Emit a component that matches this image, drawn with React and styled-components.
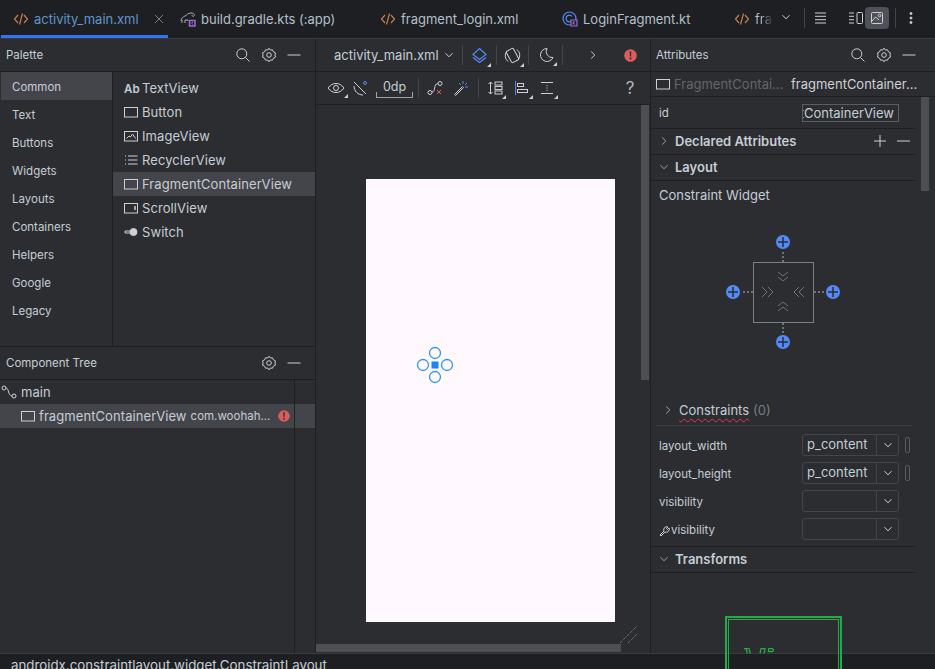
import styled, { createGlobalStyle } from "styled-components";

const GlobalStyle = createGlobalStyle`
  html, body { margin: 0; padding: 0; height: 100%; background: #1e1f22; overflow: hidden; }
  #root { height: 100%; }
  * { box-sizing: border-box; }
`;

const Svg = ({ size = 16, w, h, color = "#ced0d6", sw = 1, children }) => (
  <svg width={w || size} height={h || size} viewBox={`0 0 ${w || size} ${h || size}`} fill="none" stroke={color} strokeWidth={sw} style={{ flex: "none", display: "block" }}>
    {children}
  </svg>
);

const XmlIcon = () => (
  <Svg color="#c77d55" sw={1.2}>
    <path d="M5 4 1.500 8 5 12M11 4l3.500 4L11 12M9.500 2.500l-3 11" />
  </Svg>
);
const GradleIcon = () => (
  <Svg>
    <path d="M1 10c0-3 2-4 4-5s3-3 6-3 4 2 3 3-2 0-2-1M2 12V9M5 12V9l3 0v1" stroke="#a8adb5" />
    <path d="M9.500 9.500h5.500v5.500H9.500z" stroke="#9b6bd6" strokeWidth="1.500" />
    <path d="M13 11l-1.500 1.200L13 13.500" stroke="#9b6bd6" />
  </Svg>
);
const KotlinClassIcon = () => (
  <Svg sw={1.2}>
    <circle cx="7.500" cy="7.500" r="6.500" stroke="#548af7" />
    <path d="M10 5.500a3.300 3.300 0 1 0 0 4" stroke="#548af7" />
    <path d="M9 9h6v6H9z" fill="#1e1f22" stroke="#9b6bd6" />
    <path d="M12.500 10.500 11 12l1.500 1.500" stroke="#9b6bd6" />
  </Svg>
);
const Chevron = ({ dir = "down", size = 10, color = "#ced0d6" }) => {
  const d = { down: "M1.500 3.200 5 6.800l3.500-3.600", right: "M3.200 1.500 6.800 5 3.200 8.500" }[dir];
  return (
    <Svg size={size} color={color}>
      <path d={d} />
    </Svg>
  );
};
const SearchIcon = () => (
  <Svg>
    <circle cx="6.800" cy="6.800" r="5" />
    <path d="m10.500 10.500 4 4" />
  </Svg>
);
const GearIcon = () => (
  <Svg>
    <path d="M8 1.200 9.300 3l2.200-.2.900 2 2 1L14 8l.4 2.200-2 1-.9 2-2.200-.2L8 14.800 6.700 13l-2.200.2-.9-2-2-1L2 8l-.4-2.200 2-1 .9-2 2.200.2z" />
    <circle cx="8" cy="8" r="2.300" />
  </Svg>
);
const Dash = () => (
  <Svg size={14}>
    <path d="M.5 7h13" />
  </Svg>
);
const Corner = styled.span`
  position: absolute;
  right: -3px;
  bottom: -3px;
  width: 0;
  height: 0;
  border-left: 4px solid transparent;
  border-bottom: 4px solid #ced0d6;
`;
const IconWrap = styled.span`
  position: relative;
  display: block;
`;
const ErrorDot = ({ size = 13 }) => (
  <svg width={size} height={size} viewBox="0 0 13 13" style={{ flex: "none", display: "block" }}>
    <circle cx="6.500" cy="6.500" r="6.300" fill="#db5c5c" />
    <path d="M5.700 2.500h1.600l-.2 5H5.900z" fill="#2b2d30" />
    <circle cx="6.500" cy="9.600" r="1" fill="#2b2d30" />
  </svg>
);

const Page = styled.div`
  width: 935px;
  height: 669px;
  display: flex;
  flex-direction: column;
  background: #1e1f22;
  font-family: Inter, "Liberation Sans", sans-serif;
  color: #ced0d6;
  overflow: hidden;
`;
const TabBar = styled.div`
  height: 39px;
  flex: none;
  display: flex;
  align-items: flex-start;
  padding-left: 1px;
  border-bottom: 1px solid #393b40;
`;
const Tab = styled.div`
  width: ${(p) => p.$w}px;
  flex: none;
  height: 38px;
  padding: 3px 0 0 12px;
  display: flex;
  align-items: center;
  gap: 5px;
  font-size: 13px;
  color: ${(p) => (p.$active ? "#5f95c9" : "#b4c0cc")};
  border-bottom: 3px solid ${(p) => (p.$active ? "#3574f0" : "transparent")};
  white-space: nowrap;
`;
const TabLabel = styled.span`
  margin-top: -1px;
`;
const CloseSlot = styled.span`
  margin-left: 10px;
`;
const FadedTab = styled.span`
  width: 20px;
  overflow: hidden;
  background: linear-gradient(90deg, #b4c0cc 30%, #1e1f22 90%);
  -webkit-background-clip: text;
  background-clip: text;
  color: transparent;
`;
const TabTools = styled.div`
  position: absolute;
  top: 7px;
  left: 780px;
  display: flex;
  align-items: center;
`;
const ToolSlot = styled.span`
  width: ${(p) => p.$w || 24}px;
  height: 22px;
  margin-left: ${(p) => p.$ml || 0}px;
  border-radius: 4px;
  display: flex;
  align-items: center;
  justify-content: center;
  background: ${(p) => (p.$active ? "#4e5157" : "transparent")};
`;
const VDivider = styled.span`
  width: 1px;
  height: 20px;
  background: #43454a;
  flex: none;
  margin: 0 ${(p) => p.$mr || 0}px 0 ${(p) => p.$ml || 0}px;
`;
const Workspace = styled.div`
  flex: 1;
  min-height: 0;
  display: flex;
  background: #2b2d30;
`;
const LeftColumn = styled.div`
  width: 316px;
  flex: none;
  display: flex;
  flex-direction: column;
  border-right: 1px solid #1e1f22;
`;
const PanelHeader = styled.div`
  height: 33px;
  flex: none;
  display: flex;
  align-items: center;
  padding: 0 ${(p) => p.$right || 14}px 0 ${(p) => p.$left || 6}px;
  font-size: 11.500px;
  color: #c5ced6;
  border-bottom: 1px solid #1e1f22;
`;
const HeaderTitle = styled.span`
  flex: 1;
`;
const HeaderIcons = styled.div`
  display: flex;
  align-items: center;
  gap: 10px;
`;
const PaletteBody = styled.div`
  height: 275px;
  flex: none;
  display: flex;
  border-bottom: 1px solid #1e1f22;
`;
const Categories = styled.div`
  width: 113px;
  flex: none;
  padding-left: 1px;
  border-right: 1px solid #1e1f22;
`;
const Category = styled.div`
  height: 28px;
  padding: 2px 0 0 11px;
  display: flex;
  align-items: center;
  font-size: 11.500px;
  color: #c5ced6;
  background: ${(p) => (p.$active ? "#43454a" : "transparent")};
`;
const WidgetList = styled.div`
  flex: 1;
  padding-top: 4px;
`;
const WidgetRow = styled.div`
  height: 24px;
  padding-left: 11px;
  display: flex;
  align-items: center;
  gap: 4px;
  font-size: 13px;
  letter-spacing: 0.08px;
  color: #c5ced6;
  background: ${(p) => (p.$active ? "#43454a" : "transparent")};
`;
const AbMark = styled.span`
  width: 14px;
  font-size: 11.500px;
  font-weight: 600;
  white-space: nowrap;
`;
const AbSlot = styled.span`
  width: 14px;
  flex: none;
`;
const TreeBody = styled.div`
  flex: 1;
  display: flex;
  position: relative;
`;
const TreeRows = styled.div`
  flex: 1;
`;
const TreeRow = styled.div`
  height: 24px;
  display: flex;
  align-items: center;
  padding-left: ${(p) => p.$indent}px;
  gap: 4px;
  font-size: 13px;
  letter-spacing: 0.08px;
  color: #c5ced6;
  background: ${(p) => (p.$active ? "#43454a" : "transparent")};
`;
const TreeHint = styled.span`
  font-size: 11.500px;
  letter-spacing: 0;
  flex: 1;
  color: #c5ced6;
`;
const TreeGutter = styled.div`
  width: 1px;
  height: 100%;
  background: #1e1f22;
  position: absolute;
  left: 294px;
  top: 0;
`;
const ErrorSlot = styled.span`
  margin-right: 25px;
`;
const Center = styled.div`
  width: 335px;
  flex: none;
  display: flex;
  flex-direction: column;
  border-right: 1px solid #1e1f22;
  position: relative;
`;
const DesignBar = styled.div`
  height: 33px;
  flex: none;
  display: flex;
  align-items: center;
  border-bottom: 1px solid #1e1f22;
  padding-left: 18px;
`;
const FileSelect = styled.div`
  display: flex;
  align-items: center;
  gap: 5px;
  font-size: 13px;
  color: #c5ced6;
  width: 128px;
  flex: none;
`;
const BarIcon = styled.span`
  width: ${(p) => p.$w || 33}px;
  margin-left: ${(p) => p.$ml || 0}px;
  display: flex;
  align-items: center;
  justify-content: center;
  flex: none;
`;
const HelpMark = styled(BarIcon)`
  font-size: 17px;
  color: #b4b8bf;
`;
const LayoutBar = styled.div`
  height: 33px;
  flex: none;
  display: flex;
  align-items: center;
  border-bottom: 1px solid #1e1f22;
  padding-left: 11px;
`;
const DpBox = styled.div`
  width: 37px;
  margin: 0 5px 0 8px;
  height: 19px;
  font-size: 12.500px;
  color: #c5ced6;
  text-align: center;
  line-height: 15px;
  border-bottom: 1px solid #9da0a8;
  border-left: 1px solid #9da0a8;
  border-right: 1px solid #9da0a8;
  border-image: linear-gradient(transparent 70%, #9da0a8 70%) 1;
  flex: none;
`;
const Canvas = styled.div`
  flex: 1;
  padding: 74px 0 0 50px;
  position: relative;
`;
const Phone = styled.div`
  width: 249px;
  height: 443px;
  background: #fff9ff;
  position: relative;
`;
const Handles = styled.div`
  position: absolute;
  left: 50px;
  top: 167px;
`;
const VScroll = styled.div`
  position: absolute;
  left: 325px;
  top: 0;
  width: 8px;
  height: 275px;
  background: #4d4f53;
`;
const HScroll = styled.div`
  position: absolute;
  left: 0;
  bottom: 1px;
  width: 305px;
  height: 8px;
  background: #4d4f53;
`;
const ResizeMark = styled.div`
  position: absolute;
  left: 303px;
  bottom: 9px;
`;
const Right = styled.div`
  flex: 1;
  display: flex;
  flex-direction: column;
  position: relative;
  min-width: 0;
`;
const AttrScroll = styled.div`
  position: absolute;
  left: 270px;
  top: 58px;
  width: 8px;
  height: 94px;
  background: #4d4f53;
`;
const ComponentRow = styled.div`
  height: 25px;
  flex: none;
  display: flex;
  align-items: center;
  padding-left: 5px;
  gap: 4px;
  font-size: 13px;
  white-space: nowrap;
  border-bottom: 1px solid #1e1f22;
`;
const Muted = styled.span`
  color: #63666c;
  width: 113px;
  flex: none;
`;
const AttrColumn = styled.div`
  width: 265px;
  flex: none;
`;
const IdRow = styled.div`
  height: 32px;
  display: flex;
  align-items: center;
  justify-content: space-between;
  padding: 0 0 0 8px;
  border-bottom: 1px solid #1e1f22;
  font-size: 11.500px;
  color: #c5ced6;
`;
const IdField = styled.div`
  width: 97px;
  height: 18px;
  margin-right: 17px;
  border: 1px solid #5a5d63;
  font-size: 13px;
  line-height: 16px;
  color: #c5ced6;
  overflow: hidden;
  white-space: nowrap;
  direction: rtl;
  text-align: left;
  padding: 0 4px 0 0;
`;
const SectionRow = styled.div`
  height: 26px;
  display: flex;
  align-items: center;
  padding: 0 6px 2px 8px;
  gap: 6px;
  border-bottom: 1px solid #1e1f22;
  font-size: 13px;
  font-weight: 600;
  color: #c5ced6;
`;
const SectionName = styled.span`
  flex: 1;
`;
const SectionTools = styled.div`
  display: flex;
  gap: 9px;
`;
const WidgetTitle = styled.div`
  padding: 6px 0 0 8px;
  height: 29px;
  font-size: 13px;
  color: #c5ced6;
`;
const WidgetDiagram = styled.div`
  height: 185px;
  padding: 24px 0 0 74px;
`;
const ConstraintsRow = styled.div`
  height: 31px;
  margin: 0 4px 0 5px;
  display: flex;
  align-items: center;
  gap: 6px;
  padding: 0 0 0 7px;
  border-bottom: 1px solid #393b40;
  font-size: 13px;
  color: #c5ced6;
`;
const Squiggle = styled.span`
  text-decoration: underline wavy #db3b4b 1px;
  text-underline-offset: 3px;
`;
const ZeroCount = styled.span`
  color: #7a7e85;
  margin-left: -2px;
`;
const AttrList = styled.div`
  padding: 5px 0 0 0;
`;
const AttrRow = styled.div`
  height: 28px;
  display: flex;
  align-items: center;
  padding-left: 8px;
  font-size: 11.500px;
  color: #c5ced6;
`;
const AttrName = styled.span`
  width: 143px;
  flex: none;
  display: flex;
  align-items: center;
  gap: 1px;
  padding-top: 2px;
`;
const Combo = styled.div`
  width: 97px;
  height: 22px;
  flex: none;
  display: flex;
  border: 1px solid #43454a;
  border-radius: 3px;
  font-size: 13px;
  color: #c5ced6;
`;
const ComboValue = styled.span`
  flex: 1;
  padding-left: 4px;
  line-height: 18px;
`;
const ComboArrow = styled.span`
  width: 22px;
  border-left: 1px solid #43454a;
  display: flex;
  align-items: center;
  justify-content: center;
`;
const Pill = styled.span`
  width: 5px;
  height: 16px;
  margin-left: 6px;
  border: 1px solid #5a5d63;
  border-radius: 2px;
`;
const TransformsSection = styled(SectionRow)`
  margin-top: 3px;
  border-top: 1px solid #1e1f22;
  height: 27px;
`;
const TransformBox = styled.div`
  margin: 43px 0 0 74px;
  width: 117px;
  height: 60px;
  border: 2px solid #27a84a;
  border-bottom: none;
  padding: 1px 1px 0;
`;
const TransformInner = styled.div`
  height: 100%;
  border: 1px solid #27a84a;
  border-bottom: none;
  padding: 28px 0 0 15px;
`;
const StatusBar = styled.div`
  height: 16px;
  flex: none;
  border-top: 1px solid #393b40;
  background: #1e1f22;
  padding: 4px 0 0 11px;
  font-size: 13.300px;
  line-height: 15px;
  color: #c5ced6;
  white-space: nowrap;
  overflow: hidden;
`;

const RectIcon = ({ inner }) => (
  <Svg size={14} color="#ced0d6">
    <rect x=".5" y="2.500" width="13" height="9.500" />
    {inner}
  </Svg>
);

const widgetIcons = {
  Button: <RectIcon />,
  ImageView: <RectIcon inner={<path d="M2.500 9.500 5 7l1.500 1 2-3 3 4.500" />} />,
  RecyclerView: (
    <Svg size={14}>
      <path d="M1 3h1M1 7h1M1 11h1M4 3h9.500M4 7h9.500M4 11h9.500" />
    </Svg>
  ),
  FragmentContainerView: <RectIcon />,
  ScrollView: <RectIcon inner={<path d="M11 5v4" strokeWidth="1.500" />} />,
  Switch: (
    <Svg size={14}>
      <path d="M1 6h5M1 8h5M1 6v2" />
      <circle cx="9.500" cy="7" r="3.500" fill="#ced0d6" />
    </Svg>
  ),
};

const categories = ["Common", "Text", "Buttons", "Widgets", "Layouts", "Containers", "Helpers", "Google", "Legacy"];
const widgets = ["Button", "ImageView", "RecyclerView", "FragmentContainerView", "ScrollView", "Switch"];

const PlusDot = ({ x, y }) => (
  <g>
    <circle cx={x} cy={y} r="7" fill="#548af7" stroke="none" />
    <path d={`M${x - 5} ${y}h10M${x} ${y - 5}v10`} stroke="#2b2d30" strokeWidth="1.500" />
  </g>
);

const ConstraintWidget = () => (
  <svg width="116" height="116" viewBox="0 0 116 116" fill="none" style={{ display: "block" }}>
    <rect x="28.500" y="28.500" width="60" height="60" stroke="#7a7e85" />
    <path d="M58 18v10M58 89v10M18 58h10M89 58h10" stroke="#868a91" strokeWidth="1.500" strokeDasharray="2 2" />
    <PlusDot x={58} y={8} />
    <PlusDot x={58} y={108} />
    <PlusDot x={8} y={58} />
    <PlusDot x={108} y={58} />
    <path d="M53 38l5 4 5-4M53 43l5 4 5-4M53 72l5-4 5 4M53 77l5-4 5 4M37 53l5 5-5 5M43 53l5 5-5 5M74 53l-5 5 5 5M79 53l-5 5 5 5" stroke="#6f737a" />
  </svg>
);

const SelectionHandles = () => (
  <svg width="38" height="38" viewBox="0 0 38 38" fill="none" stroke="#2f95f5" strokeWidth="1.300" style={{ display: "block" }}>
    <circle cx="19" cy="7" r="5.500" />
    <circle cx="19" cy="31" r="5.500" />
    <circle cx="7" cy="19" r="5.500" />
    <circle cx="31" cy="19" r="5.500" />
    <rect x="15.500" y="15.500" width="7" height="7" fill="#1a86f5" stroke="none" />
  </svg>
);

const Cornered = ({ children }) => (
  <IconWrap>
    {children}
    <Corner />
  </IconWrap>
);

const App = () => (
  <>
    <GlobalStyle />
    <Page>
      <TabBar>
        <Tab $active $w={167}>
          <XmlIcon />
          <TabLabel>activity_main.xml</TabLabel>
          <CloseSlot>
            <Svg size={10} color="#7a7e85">
              <path d="M1 1l8 8M9 1 1 9" />
            </Svg>
          </CloseSlot>
        </Tab>
        <Tab $w={200}>
          <GradleIcon />
          <TabLabel>build.gradle.kts (:app)</TabLabel>
        </Tab>
        <Tab $w={182}>
          <XmlIcon />
          <TabLabel>fragment_login.xml</TabLabel>
        </Tab>
        <Tab $w={172}>
          <KotlinClassIcon />
          <TabLabel>LoginFragment.kt</TabLabel>
        </Tab>
        <Tab $w={60}>
          <XmlIcon />
          <FadedTab>fragment</FadedTab>
        </Tab>
        <TabTools>
          <ToolSlot $w={14}>
            <Chevron size={12} />
          </ToolSlot>
          <VDivider $ml={10} $mr={3} />
          <ToolSlot $w={24}>
            <Svg>
              <path d="M3 3h11M3 6.300h11M3 9.700h11M3 13h11" />
            </Svg>
          </ToolSlot>
          <ToolSlot $w={18} $ml={15}>
            <Svg>
              <path d="M1 3h5M1 6.300h5M1 9.700h5M1 13h5" />
              <rect x="9" y="2.500" width="5.500" height="11" rx="1" />
            </Svg>
          </ToolSlot>
          <ToolSlot $w={24} $active>
            <Svg>
              <rect x="2.500" y="2.500" width="11" height="11" rx="1" />
              <path d="M3 11l3.500-4 3.500 3" />
              <circle cx="10.500" cy="5.500" r="1.300" />
            </Svg>
          </ToolSlot>
          <VDivider $ml={6} $mr={6} />
          <ToolSlot $w={18}>
            <Svg>
              <circle cx="8" cy="3.500" r="1" fill="#ced0d6" />
              <circle cx="8" cy="8" r="1" fill="#ced0d6" />
              <circle cx="8" cy="12.500" r="1" fill="#ced0d6" />
            </Svg>
          </ToolSlot>
        </TabTools>
      </TabBar>

      <Workspace>
        <LeftColumn>
          <PanelHeader>
            <HeaderTitle>Palette</HeaderTitle>
            <HeaderIcons>
              <SearchIcon />
              <GearIcon />
              <Dash />
            </HeaderIcons>
          </PanelHeader>
          <PaletteBody>
            <Categories>
              {categories.map((c, i) => (
                <Category key={c} $active={i === 0}>
                  {c}
                </Category>
              ))}
            </Categories>
            <WidgetList>
              <WidgetRow>
                <AbSlot>
                  <AbMark>Ab</AbMark>
                </AbSlot>
                TextView
              </WidgetRow>
              {widgets.map((w) => (
                <WidgetRow key={w} $active={w === "FragmentContainerView"}>
                  {widgetIcons[w]}
                  {w}
                </WidgetRow>
              ))}
            </WidgetList>
          </PaletteBody>
          <PanelHeader>
            <HeaderTitle>Component Tree</HeaderTitle>
            <HeaderIcons>
              <GearIcon />
              <Dash />
            </HeaderIcons>
          </PanelHeader>
          <TreeBody>
            <TreeRows>
              <TreeRow $indent={1}>
                <Svg>
                  <circle cx="3" cy="4" r="2" />
                  <circle cx="13" cy="12" r="2" />
                  <path d="M5 4c3 0 2 8 6 8" />
                </Svg>
                main
              </TreeRow>
              <TreeRow $active $indent={21}>
                <RectIcon />
                fragmentContainerView
                <TreeHint>com.woohah...</TreeHint>
                <ErrorSlot>
                  <ErrorDot size={12} />
                </ErrorSlot>
              </TreeRow>
            </TreeRows>
            <TreeGutter />
          </TreeBody>
        </LeftColumn>

        <Center>
          <DesignBar>
            <FileSelect>
              activity_main.xml
              <Chevron />
            </FileSelect>
            <VDivider />
            <BarIcon $w={33}>
              <Cornered>
                <Svg size={17} color="#548af7" sw={1.2}>
                  <path d="M8.500 1.500 15 7.500l-6.500 5-6.500-5zM2 10.500l6.500 5 6.500-5" />
                </Svg>
              </Cornered>
            </BarIcon>
            <VDivider />
            <BarIcon $w={31}>
              <Cornered>
                <Svg size={17}>
                  <path d="M2.500 4.500A7.500 7.500 0 0 0 4 14.500M14.500 12.500A7.500 7.500 0 0 0 13 2.500" />
                  <rect x="4.500" y="2" width="8" height="13" rx="1.500" transform="rotate(-28 8.500 8.500)" />
                </Svg>
              </Cornered>
            </BarIcon>
            <VDivider />
            <BarIcon $w={33}>
              <Cornered>
                <Svg>
                  <path d="M9 1.500a6.500 6.500 0 1 0 6 9 6 6 0 0 1-6-9z" />
                </Svg>
              </Cornered>
            </BarIcon>
            <VDivider />
            <BarIcon $w={60}>
              <Chevron dir="right" />
            </BarIcon>
            <BarIcon $w={14}>
              <ErrorDot />
            </BarIcon>
          </DesignBar>
          <LayoutBar>
            <BarIcon $w={18}>
              <Cornered>
                <Svg w={18} h={14}>
                  <path d="M1 7c4-6 12-6 16 0-4 6-12 6-16 0z" />
                  <circle cx="9" cy="7" r="2.500" />
                </Svg>
              </Cornered>
            </BarIcon>
            <BarIcon $w={16} $ml={7}>
              <Svg>
                <path d="M2 2l12 12M2 6c0 5 4 9 9 9" />
                <circle cx="13" cy="3" r="1.500" stroke="#548af7" />
              </Svg>
            </BarIcon>
            <DpBox>0dp</DpBox>
            <VDivider />
            <BarIcon $w={32}>
              <Svg>
                <circle cx="3" cy="12.500" r="2" />
                <circle cx="13" cy="3.500" r="2" />
                <path d="M5 12c4 0 1-8 6-8.500" />
                <path d="M10 10l4 4M14 10l-4 4" stroke="#db5c5c" />
              </Svg>
            </BarIcon>
            <BarIcon $w={20}>
              <Svg>
                <path d="M1.500 14.500l8-8 1 1-8 8z" />
                <path d="M10 1v3M14 3l-2 2M15 7h-3M6 3l2 2" stroke="#548af7" />
              </Svg>
            </BarIcon>
            <VDivider $ml={7} $mr={5} />
            <BarIcon $w={22}>
              <Cornered>
                <Svg>
                  <path d="M3.500 2v12M1.500 4l2-2 2 2M1.500 12l2 2 2-2" />
                  <rect x="8" y="2" width="7" height="3" />
                  <rect x="8" y="6.500" width="7" height="3" />
                  <rect x="8" y="11" width="7" height="3" />
                </Svg>
              </Cornered>
            </BarIcon>
            <BarIcon $w={22} $ml={5}>
              <Cornered>
                <Svg>
                  <path d="M1.500 1v14" stroke="#548af7" />
                  <rect x="3.500" y="3.500" width="6" height="3" />
                  <rect x="3.500" y="9.500" width="10" height="3" />
                </Svg>
              </Cornered>
            </BarIcon>
            <BarIcon $w={20} $ml={4}>
              <Cornered>
                <Svg>
                  <path d="M2 2.500h12M2 13.500h12M8 5v1M8 7.500v1M8 10v1" />
                </Svg>
              </Cornered>
            </BarIcon>
            <HelpMark $w={28} $ml={59}>
              ?
            </HelpMark>
          </LayoutBar>
          <Canvas>
            <Phone>
              <Handles>
                <SelectionHandles />
              </Handles>
            </Phone>
            <VScroll />
            <HScroll />
            <ResizeMark>
              <svg width="20" height="20" viewBox="0 0 20 20" stroke="#8a8d93" strokeDasharray="1 1" style={{ display: "block" }}>
                <path d="M1 19 18 2M9 19l9-9" />
              </svg>
            </ResizeMark>
          </Canvas>
        </Center>

        <Right>
          <PanelHeader $left={5} $right={19}>
            <HeaderTitle>Attributes</HeaderTitle>
            <HeaderIcons>
              <SearchIcon />
              <GearIcon />
              <Dash />
            </HeaderIcons>
          </PanelHeader>
          <ComponentRow>
            <RectIcon />
            <Muted>FragmentContai...</Muted>
            fragmentContainer...
          </ComponentRow>
          <AttrColumn>
            <IdRow>
              id
              <IdField>fragmentContainerView</IdField>
            </IdRow>
            <SectionRow>
              <Chevron dir="right" color="#9da0a8" />
              <SectionName>Declared Attributes</SectionName>
              <SectionTools>
                <Svg size={14}>
                  <path d="M7 1v12M1 7h12" />
                </Svg>
                <Svg size={14}>
                  <path d="M1 7h13" />
                </Svg>
              </SectionTools>
            </SectionRow>
            <SectionRow>
              <Chevron color="#9da0a8" />
              <SectionName>Layout</SectionName>
            </SectionRow>
            <WidgetTitle>Constraint Widget</WidgetTitle>
            <WidgetDiagram>
              <ConstraintWidget />
            </WidgetDiagram>
            <ConstraintsRow>
              <Chevron dir="right" color="#9da0a8" />
              <Squiggle>Constraints</Squiggle>
              <ZeroCount>(0)</ZeroCount>
            </ConstraintsRow>
            <AttrList>
              <AttrRow>
                <AttrName>layout_width</AttrName>
                <Combo>
                  <ComboValue>p_content</ComboValue>
                  <ComboArrow>
                    <Chevron />
                  </ComboArrow>
                </Combo>
                <Pill />
              </AttrRow>
              <AttrRow>
                <AttrName>layout_height</AttrName>
                <Combo>
                  <ComboValue>p_content</ComboValue>
                  <ComboArrow>
                    <Chevron />
                  </ComboArrow>
                </Combo>
                <Pill />
              </AttrRow>
              <AttrRow>
                <AttrName>visibility</AttrName>
                <Combo>
                  <ComboValue />
                  <ComboArrow>
                    <Chevron />
                  </ComboArrow>
                </Combo>
              </AttrRow>
              <AttrRow>
                <AttrName>
                  <Svg size={11}>
                    <path d="M1 10l4-4a3 3 0 0 1 4-4L7.500 3.500l1 1L10 3a3 3 0 0 1-4 4l-4 4z" />
                  </Svg>
                  visibility
                </AttrName>
                <Combo>
                  <ComboValue />
                  <ComboArrow>
                    <Chevron />
                  </ComboArrow>
                </Combo>
              </AttrRow>
            </AttrList>
            <TransformsSection>
              <Chevron color="#9da0a8" />
              <SectionName>Transforms</SectionName>
            </TransformsSection>
            <TransformBox>
              <TransformInner>
                <Svg w={30} h={6} color="#27a84a" sw={1.3}>
                  <path d="M0 .7h5l1.500 5M2 1l1.500 4.500M16 5.500l1-4.800h4l-1 4.800M24.500.7h4l1.300 1.300-1.300 1.500h-4z" />
                </Svg>
              </TransformInner>
            </TransformBox>
          </AttrColumn>
          <AttrScroll />
        </Right>
      </Workspace>
      <StatusBar>androidx.constraintlayout.widget.ConstraintLayout</StatusBar>
    </Page>
  </>
);

export default App;
